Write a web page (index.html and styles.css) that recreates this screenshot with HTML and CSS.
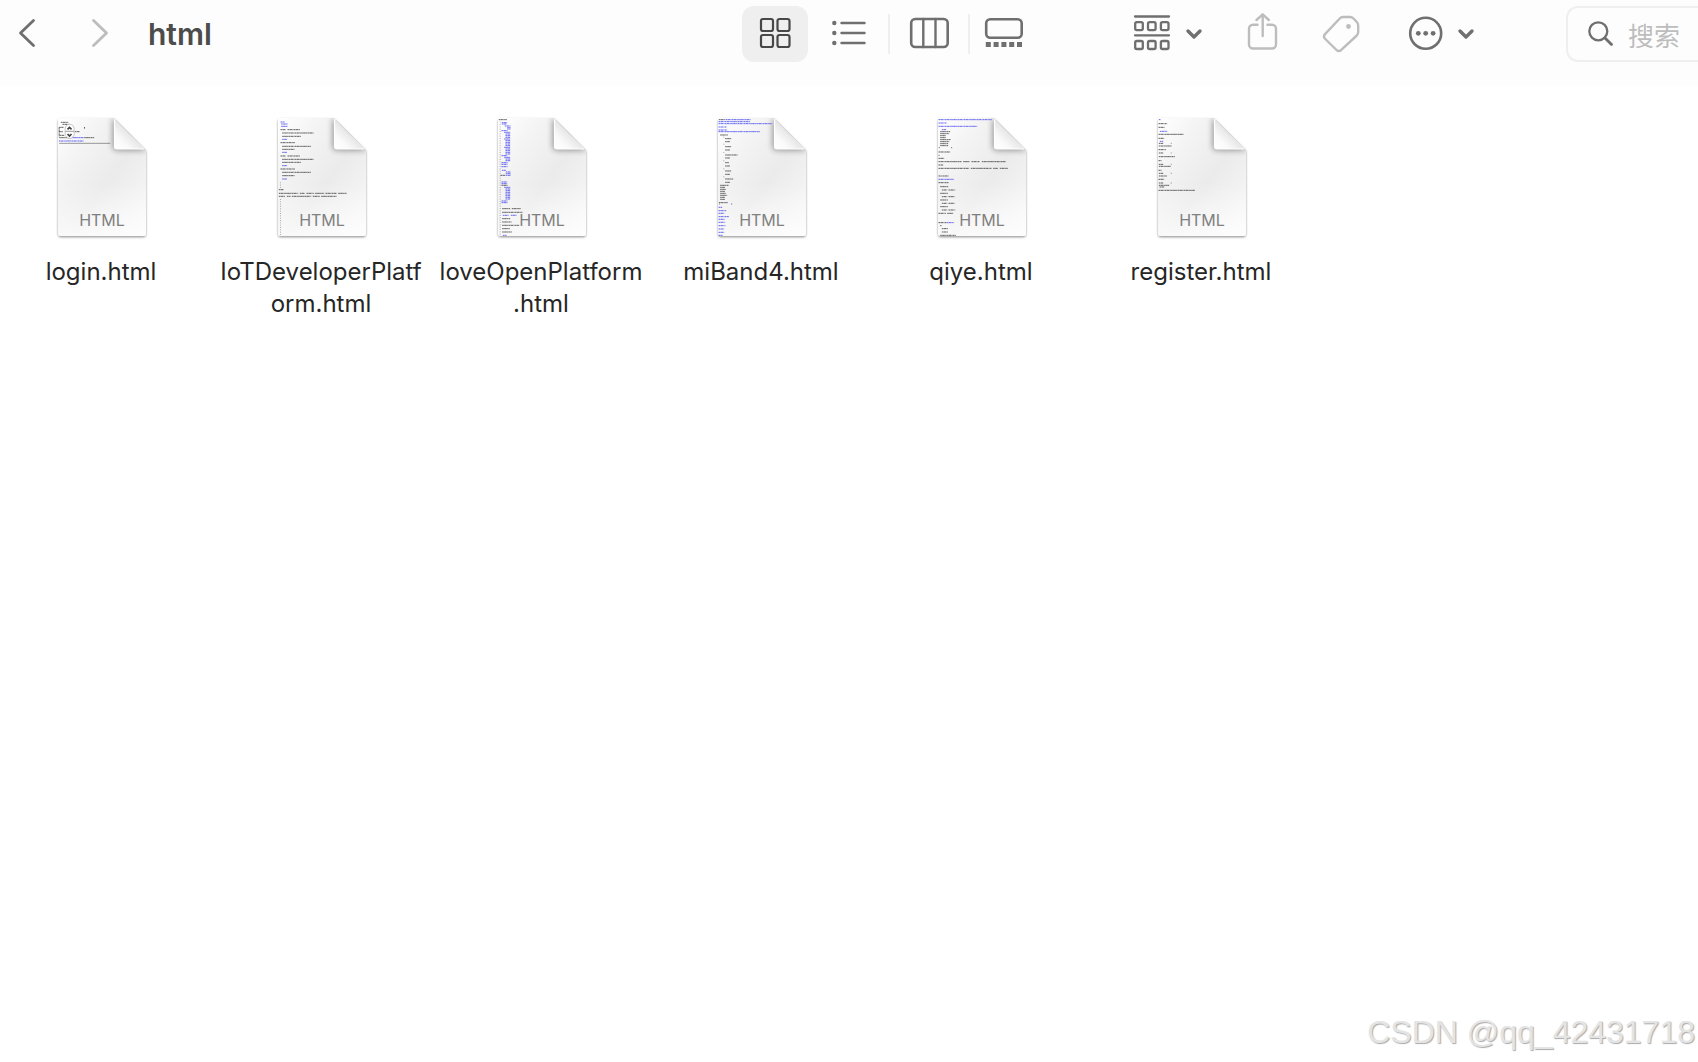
FILE: index.html
```html
<!DOCTYPE html>
<html lang="zh-CN">
<head>
<meta charset="utf-8">
<title>html</title>
<link rel="stylesheet" href="styles.css">
</head>
<body>
<svg class="defs" width="0" height="0" aria-hidden="true">
  <defs>
    <linearGradient id="paper" x1="0" y1="0" x2="1" y2="1">
      <stop offset="0" stop-color="#ffffff"/><stop offset=".25" stop-color="#f4f4f4"/><stop offset=".55" stop-color="#ebebeb"/><stop offset="1" stop-color="#fafafa"/>
    </linearGradient>
    <linearGradient id="low" x1="0" y1="0" x2="0" y2="1">
      <stop offset=".55" stop-color="#fff" stop-opacity="0"/><stop offset="1" stop-color="#fff" stop-opacity=".7"/>
    </linearGradient>
    <linearGradient id="curl" x1="0" y1="1" x2=".55" y2=".45">
      <stop offset="0" stop-color="#ffffff"/><stop offset=".45" stop-color="#fafafa"/><stop offset="1" stop-color="#e2e2e2"/>
    </linearGradient>
    <filter id="drop" x="-10%" y="-10%" width="120%" height="120%">
      <feDropShadow dx="0" dy="1.2" stdDeviation="1.2" flood-color="#000" flood-opacity=".42"/>
    </filter>
    <filter id="soft" x="-40%" y="-40%" width="180%" height="180%"><feGaussianBlur stdDeviation="3"/></filter>
    <clipPath id="sheet-clip"><path d="M9 5H62L94 37V120a3 3 0 0 1-3 3H9a3 3 0 0 1-3-3V8a3 3 0 0 1 3-3z"/></clipPath>
    <symbol id="sheet" viewBox="0 0 98 130">
      <path filter="url(#drop)" fill="url(#paper)" d="M9 5H62L94 37V120a3 3 0 0 1-3 3H9a3 3 0 0 1-3-3V8a3 3 0 0 1 3-3z"/>
      <g clip-path="url(#sheet-clip)">
        <path fill="url(#low)" d="M5 5H95V123H5z"/>
        <path filter="url(#soft)" fill="#000" opacity=".42" d="M61 4V34a3 3 0 0 0 3 3H95z"/>
      </g>
      <path fill="url(#curl)" d="M62 5.500V33a3 3 0 0 0 3 3H93.500Q77 21 62 5.500z"/>
      <path fill="none" stroke="#fff" stroke-width="1.200" d="M62.500 6V33a3 3 0 0 0 3 3H92"/>
    </symbol>
  </defs>
</svg>

<header class="toolbar">
  <nav class="location">
    <button class="tool back" aria-label="后退"><svg viewBox="0 0 54 56"><path stroke-width="2.800" d="M33.500 14.500 20.500 27 33.500 39.500"/></svg></button>
    <button class="tool forward dim" aria-label="前进"><svg viewBox="0 0 74 56"><path stroke-width="2.800" d="M39.500 14.500 52.500 27 39.500 39.500"/></svg></button>
    <h1 class="title">html</h1>
  </nav>
  <div class="views">
    <button class="tool icons selected" aria-label="图标"><svg viewBox="0 0 66 56"><g stroke-width="2.200"><rect x="19" y="13" width="12" height="12" rx="2"/><rect x="35.500" y="13" width="12" height="12" rx="2"/><rect x="19" y="29" width="12" height="12" rx="2"/><rect x="35.500" y="29" width="12" height="12" rx="2"/></g></svg></button>
    <button class="tool list" aria-label="列表"><svg viewBox="0 0 80 56"><path stroke-width="2.400" d="M33.500 17H56.500M33.500 27H56.500M33.500 37H56.500"/><g class="fill"><circle cx="26.300" cy="17" r="2.200"/><circle cx="26.300" cy="27" r="2.200"/><circle cx="26.300" cy="37" r="2.200"/></g></svg></button>
    <span class="divider"></span>
    <button class="tool columns" aria-label="分栏"><svg viewBox="0 0 78 56"><rect x="21.200" y="13" width="36.500" height="28" rx="4" stroke-width="2.600"/><path stroke-width="2.400" d="M33.300 13V41M45.500 13V41"/></svg></button>
    <span class="divider"></span>
    <button class="tool gallery" aria-label="画廊"><svg viewBox="0 0 68 56"><rect x="16.200" y="13.200" width="35.500" height="18.500" rx="4" stroke-width="2.600"/><path class="dots" stroke-width="5" stroke-dasharray="5 2.800" d="M15.800 38.500H52"/></svg></button>
  </div>
  <div class="actions">
    <button class="tool group" aria-label="分组"><svg viewBox="0 0 100 56"><g stroke-width="2.300"><path d="M17 10.500H51M17 29.300H51"/><rect x="17.200" y="16.200" width="7.600" height="8" rx="1.600"/><rect x="30" y="16.200" width="7.600" height="8" rx="1.600"/><rect x="42.900" y="16.200" width="7.600" height="8" rx="1.600"/><rect x="17.200" y="35" width="7.600" height="8" rx="1.600"/><rect x="30" y="35" width="7.600" height="8" rx="1.600"/><rect x="42.900" y="35" width="7.600" height="8" rx="1.600"/></g><path stroke-width="3.400" d="M70 25 76 31 82 25"/></svg></button>
    <button class="tool share dim" aria-label="共享"><svg viewBox="0 0 82 56"><path stroke-width="2.400" d="M39.500 18.800H35a4 4 0 0 0-4 4V38.500a4 4 0 0 0 4 4H54a4 4 0 0 0 4-4V22.800a4 4 0 0 0-4-4H49.500M44.700 30V8.500M38.500 14 44.700 8.300 50.800 14"/></svg></button>
    <button class="tool tag dim" aria-label="标签"><svg viewBox="0 0 84 56"><path stroke-width="2.400" d="M43 11H50Q52 11 53.500 12.500L56.800 16Q58.200 17.500 58.200 19.500V26Q58.200 28 56.800 29.500L41 44.200Q38.700 46 36.500 44L24.800 32.500Q23 30.300 25 28.200L39.500 12.800Q41 11 43 11z"/><circle class="fill" cx="48.500" cy="20.500" r="2.400"/></svg></button>
    <button class="tool more" aria-label="更多"><svg viewBox="0 0 116 56"><circle cx="41.700" cy="27.300" r="15.500" stroke-width="2.600"/><g class="fill"><circle cx="34.300" cy="27.300" r="2.400"/><circle cx="41.700" cy="27.300" r="2.400"/><circle cx="49.100" cy="27.300" r="2.400"/></g><path stroke-width="3.400" d="M76 25 82 31 88 25"/></svg></button>
  </div>
  <label class="search">
    <svg viewBox="0 0 26 26"><circle cx="10.300" cy="10.300" r="9" stroke-width="2.300"/><path stroke-width="2.800" d="M17 17 23.500 23.500"/></svg>
    <input type="text" placeholder="搜索" aria-label="搜索">
  </label>
</header>

<main class="files">
  <figure class="file">
    <svg class="doc" viewBox="0 0 98 130"><use href="#sheet" width="98" height="130"/>
      <g class="code" transform="translate(5.500 5) scale(.3333) translate(-52 -39)">
        <path d="M62 52H84M67 58H88M57 67H70M57 67V94M57 80H68M58 91H72M104 80H118M133 66V72M57 98H95M132 98H162"/><path class="solid" d="M57 115H210"/><path class="blue" d="M96 98H131M56 108H130"/>
        <rect x="75" y="58" width="27" height="42" rx="13" fill="#fff" stroke="#aaa" stroke-width="2"/><path class="solid" d="M76 79H101"/><path class="arrow" d="M82 73 88 67 94 73M82 87 88 93 94 87"/>
      </g>
      <text class="kind" x="50" y="113">HTML</text></svg>
    <figcaption>login.html</figcaption>
  </figure>
  <figure class="file">
    <svg class="doc" viewBox="0 0 98 130"><use href="#sheet" width="98" height="130"/>
      <g class="code" transform="translate(5.500 5) scale(.3333) translate(-203 -39)">
        <path class="blue" d="M212 51H224M214 57H234M214 64H234M217 103H232M217 142H232M217 182H232M217 222H232"/>
        <path d="M212 74H228M233 74H270M217 84H312M217 94H274M212 113H255M217 124H303M217 133H254M212 153H228M233 153H270M217 163H312M217 172H274M212 192H255M217 202H303M217 212H254M207 254H222M207 265H265M270 265H284M290 265H312M316 265H343M347 265H380M385 265H411M207 274H226M231 274H242M246 274H304M309 274H330M334 274H380"/>
        <path class="faint" d="M212 232V249M212 282V390"/>
      </g>
      <text class="kind" x="50" y="113">HTML</text></svg>
    <figcaption>IoTDeveloperPlatf<br>orm.html</figcaption>
  </figure>
  <figure class="file">
    <svg class="doc" viewBox="0 0 98 130"><use href="#sheet" width="98" height="130"/>
      <g class="code" transform="translate(5.500 5) scale(.3333) translate(-203 -39)">
        <path class="blue" d="M216 53H232M216 57H230M225 63H242M232 68H242M232 72H242M215 77H233M223 82H242M227 87H242M227 92H242M227 97H242M223 102H242M227 107H242M227 112H242M227 117H242M227 122H242M223 127H242M227 132H242M227 137H242M227 142H242M227 147H242M215 152H232M223 157H242M227 162H242M227 167H242M215 173H233M215 178H233M215 185H233M216 196H228M228 201H242M228 206H242M228 211H242M215 231H232M215 236H232M223 247H242M227 252H242M227 257H242M227 262H242M227 267H242M227 272H242M227 277H242M227 282H242M215 288H233M215 293H233M219 331H236M243 331H260M219 391H230"/>
        <path d="M207 44H231M212 211H226M215 241H234M217 311H241M246 311H273M217 322H278M217 341H242M217 351H245M217 361H268M217 371H240M217 381H246"/>
        <path class="faint" d="M211 50V390"/>
      </g>
      <text class="kind" x="50" y="113">HTML</text></svg>
    <figcaption>loveOpenPlatform<br>.html</figcaption>
  </figure>
  <figure class="file">
    <svg class="doc" viewBox="0 0 98 130"><use href="#sheet" width="98" height="130"/>
      <g class="code" transform="translate(5.500 5) scale(.3333) translate(-143 -39)">
        <path class="blue" d="M167 44H242M146 50H240M146 56H306M146 66H171M146 75H172M146 80H270M146 307H157M146 317H169M146 325H163M146 335H177M146 343H165M146 352H166M146 362H167M146 372H163M146 382H163M146 391H158"/>
        <path d="M147 44H165M151 90H174M166 101H184M166 110H180M166 125H184M166 135H180M166 150H204M166 159H180M166 173H177M166 183H180M166 198H184M166 208H180M166 222H190M166 232H180M151 241H177M151 247H165M151 253H168M151 259H166M151 265H168M151 271H172M151 277H166M151 283H165M147 293H174M148 297H150M184 297H187"/>
        <path class="faint" d="M162 95V98M162 116V121M162 141V146M162 166V171M162 190V195M162 214V219"/>
      </g>
      <text class="kind" x="50" y="113">HTML</text></svg>
    <figcaption>miBand4.html</figcaption>
  </figure>
  <figure class="file">
    <svg class="doc" viewBox="0 0 98 130"><use href="#sheet" width="98" height="130"/>
      <g class="code" transform="translate(5.500 5) scale(.3333) translate(-83 -39)">
        <path class="blue" d="M86 44H246M86 54H111M86 64H202M96 74H109M86 223H132M111 353H132"/>
        <path d="M91 80H121M91 86H118M91 92H108M91 98H108M91 104H122M91 110H118M91 116H115M91 122H116M87 128H90M124 128H127M86 141H121M86 151H89M86 160H103M86 170H155M160 170H180M185 170H210M216 170H287M86 180H101M86 190H178M183 190H246M250 190H264M270 190H294M86 213H96M98 213H116M86 233H116M91 245H115M96 255H112M116 255H136M91 265H114M96 275H112M116 275H135M91 285H114M96 295H112M116 295H135M91 305H114M96 315H112M116 315H136M86 325H108M112 325H130M86 353H110M91 362H95M96 371H114M96 381H114M91 391H138"/>
      </g>
      <text class="kind" x="50" y="113">HTML</text></svg>
    <figcaption>qiye.html</figcaption>
  </figure>
  <figure class="file">
    <svg class="doc" viewBox="0 0 98 130"><use href="#sheet" width="98" height="130"/>
      <g class="code" transform="translate(5.500 5) scale(.3333) translate(-113 -39)">
        <path class="blue" d="M117 44H123M120 79H142M120 109H130"/>
        <path d="M116 56H142M116 67H135M116 88H192M116 100H133M117 115H130M153 115H155M117 123H156M116 134H138M117 144H130M153 144H155M117 155H165M116 167H125M117 178H130M153 178H155M117 184H153M116 196H125M117 205H130M153 205H155M117 213H141M116 223H133M117 234H130M153 234H155M117 241H148M119 246H133M116 256H226"/>
      </g>
      <text class="kind" x="50" y="113">HTML</text></svg>
    <figcaption>register.html</figcaption>
  </figure>
</main>
<p class="watermark">CSDN @qq_42431718</p>
</body>
</html>
```
FILE: styles.css
```css
* {
  box-sizing: border-box;
}

body {
  margin: 0;
  min-height: 100vh;
  position: relative;
  background: #fff;
  color: #262626;
  font-family: Inter, "Noto Sans CJK SC", sans-serif;
}

.defs {
  display: block;
}

.toolbar {
  display: flex;
  align-items: flex-start;
  height: 86px;
  padding-top: 6px;
  background: #fdfdfd;
}

.location {
  display: flex;
  flex: 1;
  align-items: center;
}

.title {
  margin: 0 0 0 20px;
  color: #4c4c4c;
  font-size: 30px;
  line-height: 56px;
  font-weight: 600;
}

.views,
.actions {
  display: flex;
  align-items: center;
}

.actions {
  margin-left: 80px;
}

.tool {
  height: 56px;
  padding: 0;
  border: 0;
  border-radius: 12px;
  background: none;
  color: #6f6f6f;
}

.tool svg,
.search svg {
  display: block;
  width: 100%;
  fill: none;
  stroke: currentColor;
  stroke-linecap: round;
  stroke-linejoin: round;
}

.tool .fill {
  fill: currentColor;
  stroke: none;
}

.tool .dots {
  stroke-linecap: butt;
}

.dim {
  color: #bdbdbd;
}

.selected {
  background: #efefef;
  color: #484848;
}

.back { width: 54px; }
.forward { width: 74px; }
.icons { width: 66px; }
.list { width: 80px; }
.columns { width: 78px; }
.gallery { width: 68px; }
.group { width: 100px; }
.share { width: 82px; }
.tag { width: 84px; }
.more { width: 116px; }

.divider {
  width: 2px;
  height: 40px;
  background: #efefef;
}

.search {
  display: flex;
  align-items: center;
  gap: 14px;
  width: 132px;
  height: 56px;
  margin-left: 66px;
  padding-left: 20px;
  border: 2px solid #efefef;
  border-right: 0;
  border-radius: 12px 0 0 12px;
  color: #6f6f6f;
}

.search svg {
  flex: none;
  width: 26px;
}

.search input {
  width: 100%;
  min-width: 0;
  padding: 2px 0 0;
  border: 0;
  outline: 0;
  background: none;
  color: #4c4c4c;
  font: 26px/32px "Noto Sans CJK SC", sans-serif;
}

.search input::placeholder {
  color: #bdbdbd;
  opacity: 1;
}

.files {
  display: grid;
  grid-template-columns: repeat(auto-fill, 202px);
  gap: 18px;
  padding-top: 27px;
}

.file {
  display: flex;
  flex-direction: column;
  align-items: center;
  gap: 13px;
  margin: 0;
}

.doc {
  width: 98px;
  height: 130px;
}

.file figcaption {
  font-size: 24px;
  line-height: 32px;
  text-align: center;
  white-space: nowrap;
}

.kind {
  fill: #808080;
  font-size: 16px;
  text-anchor: middle;
}

.code path {
  fill: none;
  stroke: #3a3a3a;
  stroke-opacity: .8;
  stroke-width: 3;
  stroke-dasharray: 5 1 8 1 3 1;
}

.code .blue {
  stroke: #4242f0;
}

.code .solid {
  stroke-dasharray: none;
  stroke-opacity: .5;
}

.code .faint {
  stroke-opacity: .4;
  stroke-dasharray: 3 4;
}

.code .arrow {
  stroke: #111;
  stroke-dasharray: none;
  stroke-width: 5;
}

.watermark {
  position: absolute;
  right: 3px;
  bottom: 12px;
  margin: 0;
  color: #e4e4e4;
  font: 32px/36px "Liberation Sans", sans-serif;
  text-shadow: 1px 1px 1px #aaa;
}
```
